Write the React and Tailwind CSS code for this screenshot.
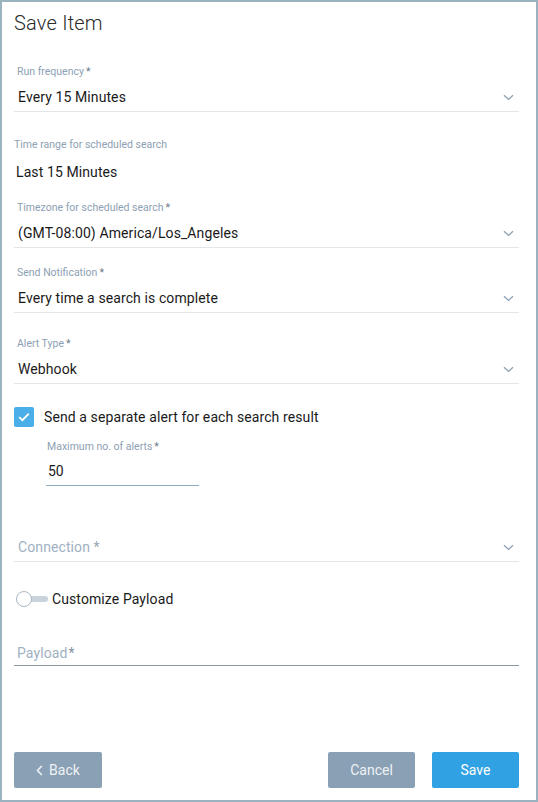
import React, { useState } from 'react';

function Chevron() {
  return (
    <svg width="11" height="7" viewBox="0 0 11 7" className="shrink-0">
      <path d="M1 1.2 L5.5 5.4 L10 1.2" fill="none" stroke="#8ea3b6" strokeWidth="1.4" />
    </svg>
  );
}

function Label({ children, req = true, className = "" }) {
  return (
    <div className={`text-[10.5px] leading-[14px] text-[#8da0b3] ${className}`}>
      {children}
      {req && <span className="text-[#6b7785] ml-[2px]">*</span>}
    </div>
  );
}

function SelectField({ label, value, className = "" }) {
  return (
    <div className={className}>
      <Label className="pl-[3px]">{label}</Label>
      <div className="flex items-center justify-between pt-[7px] pb-[3px] pl-[4px] pr-[5px] border-b border-[#e3e6e9]">
        <span className="text-[14px] leading-[22px] tracking-[0.1px] text-[#1a1a1a]">{value}</span>
        <Chevron />
      </div>
    </div>
  );
}

export default function App() {
  const [separate, setSeparate] = useState(true);
  const [custom, setCustom] = useState(false);

  return (
    <div className="w-[538px] h-[802px] border-2 border-[#9ab3c1] bg-white flex flex-col pl-[12px] pr-[17px] font-['Roboto',sans-serif]">
      <h1 className="mt-[7px] text-[20px] leading-[28px] tracking-[0.2px] font-light text-[#2a2a2a]">Save Item</h1>

      <SelectField className="mt-[28px]" label="Run frequency" value="Every 15 Minutes" />

      <div className="mt-[26px]">
        <Label req={false}>Time range for scheduled search</Label>
        <div className="mt-[9px] pl-[2px] text-[14px] leading-[22px] tracking-[0.1px] text-[#1a1a1a]">Last 15 Minutes</div>
      </div>

      <SelectField className="mt-[18px]" label="Timezone for scheduled search" value="(GMT-08:00) America/Los_Angeles" />
      <SelectField className="mt-[18px]" label="Send Notification" value="Every time a search is complete" />
      <SelectField className="mt-[24px]" label="Alert Type" value="Webhook" />

      <label className="mt-[22px] flex items-center gap-[10px] cursor-pointer">
        <span
          onClick={() => setSeparate(!separate)}
          className={`w-[20px] h-[20px] rounded-[2px] flex items-center justify-center ${separate ? 'bg-[#4aaee8]' : 'border-2 border-[#9ab0c2] bg-white'}`}
        >
          {separate && (
            <svg width="12" height="10" viewBox="0 0 12 10">
              <path d="M1.2 5.2 L4.4 8.2 L10.8 1.6" fill="none" stroke="white" strokeWidth="1.8" />
            </svg>
          )}
        </span>
        <span className="text-[14px] leading-[22px] tracking-[0.1px] text-[#1a1a1a]">Send a separate alert for each search result</span>
      </label>

      <div className="mt-[12px] ml-[32px] w-[153px]">
        <Label className="pl-[1px]">Maximum no. of alerts</Label>
        <div className="pt-[6px] pb-[3px] pl-[2px] text-[14px] leading-[22px] text-[#1a1a1a] border-b border-[#8eaec6]">50</div>
      </div>

      <div className="mt-[50px] flex items-center justify-between pb-[3px] pl-[4px] pr-[5px] border-b border-[#e3e6e9]">
        <span className="text-[14px] leading-[22px] tracking-[0.1px] text-[#9fb1c2]">Connection <span className="text-[#9aa6b1]">*</span></span>
        <Chevron />
      </div>

      <div className="mt-[27px] flex items-center h-[20px]">
        <button onClick={() => setCustom(!custom)} className="relative w-[36px] h-[20px] ml-[2px] shrink-0">
          <span className="absolute left-[12px] right-[4px] top-[7px] h-[6px] rounded-full bg-[#c9d3dc]" />
          <span className={`absolute top-[2px] w-[16px] h-[16px] rounded-full bg-white border border-[#a9b8c6] ${custom ? 'left-[18px]' : 'left-0'}`} />
        </button>
        <span className="text-[14px] leading-[22px] tracking-[0.1px] text-[#1a1a1a]">Customize Payload</span>
      </div>

      <div className="mt-[32px] pl-[3px] border-b border-[#8a98a6]">
        <span className="text-[14px] leading-[22px] tracking-[0.1px] text-[#9fb1c2]">Payload<span className="text-[#8593a0] ml-[1px]">*</span></span>
      </div>

      <div className="mt-auto mb-[12px] flex items-center">
        <button className="w-[88px] h-[36px] rounded-[2px] bg-[#8aa0b4] text-[#eef2f5] text-[14px] flex items-center justify-center gap-[6px]">
          <svg width="7" height="11" viewBox="0 0 7 11">
            <path d="M5.8 1 L1.5 5.5 L5.8 10" fill="none" stroke="#eef2f5" strokeWidth="1.6" />
          </svg>
          Back
        </button>
        <button className="ml-auto w-[87px] h-[36px] rounded-[2px] bg-[#8aa0b4] text-[#eef2f5] text-[14px]">Cancel</button>
        <button className="ml-[17px] w-[87px] h-[36px] rounded-[2px] bg-[#30a2e3] text-white text-[14px]">Save</button>
      </div>
    </div>
  );
}
